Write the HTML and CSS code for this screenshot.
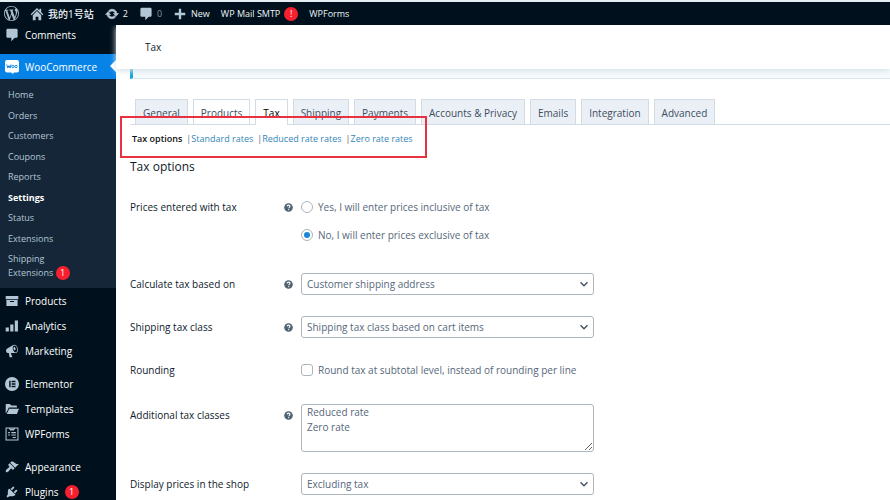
FILE: index.html
```html
<!DOCTYPE html>
<html lang="en">
<head>
    <meta charset="UTF-8">
    <meta name="viewport" content="width=device-width, initial-scale=1.0">
    <title>Tax - WooCommerce settings</title>
    <link rel="stylesheet" href="styles.css">
</head>
<body>
    <!-- Shared icons -->
    <svg class="sprite" aria-hidden="true">
        <symbol id="icon-help" viewBox="0 0 20 20">
            <circle cx="10" cy="10" r="9.5" fill="#50616f"/>
            <path d="M6.8 7.6C7 5.6 8.300 4.700 10.100 4.700c1.900 0 3.200 1 3.200 2.700 0 2.300-2.800 2.300-2.800 4.300" fill="none" stroke="#fff" stroke-width="2.400"/>
            <circle cx="10.400" cy="14.700" r="1.500" fill="#fff"/>
        </symbol>
        <symbol id="icon-chevron" viewBox="0 0 20 20">
            <path d="M3 6.500l7 7 7-7" fill="none" stroke="#47535e" stroke-width="2.800"/>
        </symbol>
        <symbol id="icon-comment" viewBox="0 0 20 20">
            <path d="M4 1h12c1.100 0 2 .900 2 2v9c0 1.100-.900 2-2 2h-2l-5 5v-5H4c-1.100 0-2-.900-2-2V3c0-1.100.900-2 2-2z"/>
        </symbol>
    </svg>

    <header class="adminbar">
        <a href="#" class="bar-item" aria-label="About WordPress">
            <svg class="wp-logo" viewBox="0 0 20 20"><path d="M20 10c0-5.510-4.490-10-10-10C4.480 0 0 4.490 0 10c0 5.520 4.480 10 10 10 5.510 0 10-4.480 10-10zM7.780 15.370L4.370 6.220c.550-.020 1.170-.080 1.170-.080.500-.060.440-1.130-.060-1.110 0 0-1.450.110-2.370.110-.180 0-.370 0-.580-.010C4.120 2.690 6.870 1.110 10 1.110c2.330 0 4.450.870 6.050 2.340-.680-.110-1.650.390-1.650 1.580 0 .740.450 1.360.900 2.100.350.610.550 1.360.550 2.460 0 1.490-1.400 5-1.400 5l-3.030-8.370c.540-.020.820-.170.820-.170.500-.050.440-1.250-.060-1.220 0 0-1.440.120-2.380.120-.870 0-2.330-.120-2.330-.120-.500-.030-.560 1.200-.060 1.220l.920.080 1.260 3.410zM17.410 10c.240-.640.740-1.870.430-4.250.700 1.290 1.050 2.710 1.050 4.250 0 3.290-1.730 6.240-4.400 7.780.970-2.590 1.940-5.200 2.920-7.780zM6.100 18.090C3.120 16.650 1.110 13.530 1.110 10c0-1.300.230-2.480.720-3.590C3.250 10.300 4.670 14.200 6.100 18.090zm4.030-6.630l2.580 6.980c-.860.290-1.760.450-2.710.450-.790 0-1.570-.110-2.290-.330.810-2.380 1.620-4.740 2.420-7.100z"/></svg>
        </a>
        <a href="#" class="bar-item bar-site">
            <svg class="icon" viewBox="0 0 20 20"><path d="M16 7.500l3 3-1.300 1.300L10 4.200l-7.700 7.600L1 10.500 10 1.500l3.500 3.500V2.500H16zM10 5.800l6 6V19h-4v-5H8v5H4v-7.200z"/></svg>
            <span>我的1号站</span>
        </a>
        <a href="#" class="bar-item">
            <svg class="icon" viewBox="0 0 20 20"><path d="M10.200 3.280c3.530 0 6.430 2.610 6.920 6h2.080l-3.500 4-3.500-4h2.320c-.450-1.970-2.210-3.450-4.320-3.450-1.450 0-2.730.710-3.540 1.780L4.950 5.660C6.230 4.200 8.110 3.280 10.200 3.280zm-.400 13.440c-3.520 0-6.430-2.610-6.920-6H.8l3.500-4c1.170 1.330 2.330 2.670 3.500 4H5.480c.450 1.970 2.210 3.450 4.320 3.450 1.450 0 2.730-.710 3.540-1.780l1.710 1.950c-1.280 1.460-3.150 2.380-5.250 2.380z" stroke="#b3c6d5"/></svg>
            <span>2</span>
        </a>
        <a href="#" class="bar-item bar-muted">
            <svg class="icon"><use href="#icon-comment"/></svg>
            <span>0</span>
        </a>
        <a href="#" class="bar-item">
            <svg class="icon" viewBox="0 0 20 20"><path d="M8.300 2.500h3.400v5.800h5.800v3.400h-5.800v5.800H8.300v-5.800H2.500V8.300h5.800z"/></svg>
            <span>New</span>
        </a>
        <a href="#" class="bar-item">WP Mail SMTP <span class="badge">!</span></a>
        <a href="#" class="bar-item">WPForms</a>
    </header>

    <div class="layout">
        <nav class="sidebar" aria-label="Main menu">
            <a href="#" class="menu-item"><svg class="icon"><use href="#icon-comment"/></svg>Comments</a>

            <a href="#" class="menu-item menu-current">
                <svg class="icon" viewBox="0 0 20 20"><path d="M3 0h14a3 3 0 0 1 3 3v12a3 3 0 0 1-3 3h-4l-2 2-2-2H3a3 3 0 0 1-3-3V3a3 3 0 0 1 3-3z" fill="#fff"/><path d="M2.500 6.500l1.500 5 1.700-3.500 1.500 3.500 1.500-5" fill="none" stroke="#0783e8" stroke-width="1.400"/><circle cx="11.300" cy="9.300" r="1.700" fill="none" stroke="#0783e8" stroke-width="1.300"/><circle cx="15.800" cy="9.300" r="1.700" fill="none" stroke="#0783e8" stroke-width="1.300"/></svg>WooCommerce
            </a>
            <ul class="submenu">
                <li><a href="#">Home</a></li>
                <li><a href="#">Orders</a></li>
                <li><a href="#">Customers</a></li>
                <li><a href="#">Coupons</a></li>
                <li><a href="#">Reports</a></li>
                <li><a href="#" class="current">Settings</a></li>
                <li><a href="#">Status</a></li>
                <li><a href="#">Extensions</a></li>
                <li><a href="#">Shipping<br>Extensions <span class="badge">1</span></a></li>
            </ul>

            <a href="#" class="menu-item"><svg class="icon" viewBox="0 0 20 20"><path d="M1 3h18v4.500H1zM2 8.500h16V17H2zM7 10v1.500h6V10z" fill-rule="evenodd"/></svg>Products</a>
            <a href="#" class="menu-item"><svg class="icon" viewBox="0 0 20 20"><path d="M1 12h4.500v6H1zM7.500 8H12v10H7.500zM14 2h4.500v16H14z"/></svg>Analytics</a>
            <a href="#" class="menu-item"><svg class="icon" viewBox="0 0 20 20"><path d="M18.150 5.940c.460 1.620.380 3.220-.020 4.480-.420 1.280-1.260 2.180-2.300 2.480-.160.060-.260.060-.400.060-.060.020-.120.020-.180.020-.060.020-.140.020-.220.020h-6.800l2.220 5.500c.020.140-.060.260-.140.340-.080.100-.240.160-.340.160H6.950c-.100 0-.260-.060-.340-.160-.080-.080-.160-.200-.140-.340l-1-5.500H4.250l-.020-.020c-.500.060-1.080-.180-1.540-.620s-.880-1.080-1.060-1.880c-.240-.800-.200-1.560-.020-2.200.180-.620.580-1.080 1.060-1.300l.020-.020 9-5.400c.100-.060.180-.100.240-.160.060-.040.140-.080.240-.120.160-.080.280-.120.500-.180 1.040-.300 2.240.100 3.220.980s1.840 2.240 2.260 3.860zm-2.580 5.980h-.020c.400-.100.740-.340 1.040-.700.580-.700.860-1.760.860-3.040 0-.640-.100-1.300-.280-1.980-.340-1.360-1.020-2.500-1.780-3.240s-1.680-1.100-2.460-.880c-.820.220-1.400.960-1.700 2-.320 1.040-.280 2.360.060 3.720.380 1.360 1 2.500 1.800 3.240.780.740 1.620 1.100 2.480.880zm-2.540-7.520c.220-.040.420-.020.620.040.380.160.760.480 1.020 1s.420 1.200.420 1.780c0 .300-.040.560-.120.800-.180.480-.440.840-.860.940-.340.100-.800-.060-1.140-.400s-.640-.860-.780-1.500c-.180-.620-.120-1.240.020-1.720s.480-.840.820-.940z"/></svg>Marketing</a>

            <a href="#" class="menu-item menu-group"><svg class="icon" viewBox="0 0 20 20"><path d="M10 0a10 10 0 1 0 0 20 10 10 0 0 0 0-20zM6 5.500h2v9H6zm3.500 0H15v2H9.500zm0 3.500H15v2H9.500zm0 3.500H15v2H9.500z" fill-rule="evenodd"/></svg>Elementor</a>
            <a href="#" class="menu-item"><svg class="icon" viewBox="0 0 20 20"><path d="M1 16V4q0-1 1-1h5l2 2h7q1 0 1 1v2H5.500L2 15zM6 9.500h14L17 17H2.500z"/></svg>Templates</a>
            <a href="#" class="menu-item"><svg class="icon" viewBox="0 0 20 20"><path d="M1.500 1.500h17v17h-17zM6 2l2.500 2.500L10 3l1.500 1.500L14 2M4.500 8h2.500m2 0h6.500M4.500 11.500h2.500m2 0h6.500M11 15h4.500" fill="none" stroke="#b3c6d5" stroke-width="1.500"/></svg>WPForms</a>

            <a href="#" class="menu-item menu-group"><svg class="icon" viewBox="0 0 20 20"><path d="M14.480 11.060L7.410 3.990l1.500-1.500c.500-.560 2.300-.470 3.510.320 1.210.800 1.430 1.280 2.910 2.100 1.180.640 2.450 1.260 4.450.850zm-.710.710L6.700 4.700 4.930 6.470c-.390.390-.390 1.020 0 1.410l1.060 1.060c.390.390.390 1.030 0 1.420-.600.600-1.430 1.110-2.210 1.690-.350.260-.700.530-1.010.840C1.430 14.230.4 16.080 1.400 17.070c.990 1 2.840-.030 4.180-1.360.310-.310.580-.660.850-1.020.570-.780 1.080-1.610 1.690-2.210.390-.390 1.020-.390 1.410 0l1.060 1.060c.390.390 1.020.390 1.410 0z"/></svg>Appearance</a>
            <a href="#" class="menu-item"><svg class="icon" viewBox="0 0 20 20"><path d="M13.110 4.360L9.870 7.600 8 5.730l3.240-3.240c.350-.340 1.050-.200 1.560.320.520.510.660 1.210.310 1.550zm-8 1.770l.910-1.120 9.010 9.010-1.190.840c-.710.710-2.630 1.160-3.820 1.160H6.140L4.900 17.260c-.590.590-1.540.590-2.120 0-.590-.580-.590-1.530 0-2.120l1.240-1.240v-3.880c0-1.130.400-3.190 1.090-3.890zm7.260 3.970l3.240-3.240c.340-.350 1.040-.210 1.550.310.520.510.660 1.210.310 1.550l-3.240 3.250z"/></svg>Plugins <span class="badge">1</span></a>
        </nav>

        <main class="content">
            <div class="page-header">Tax</div>
            <div class="notice"></div>

            <nav class="tabs" aria-label="Settings">
                <a href="#" class="tab">General</a>
                <a href="#" class="tab tab-light">Products</a>
                <a href="#" class="tab tab-active">Tax</a>
                <a href="#" class="tab">Shipping</a>
                <a href="#" class="tab">Payments</a>
                <a href="#" class="tab">Accounts &amp; Privacy</a>
                <a href="#" class="tab">Emails</a>
                <a href="#" class="tab">Integration</a>
                <a href="#" class="tab">Advanced</a>
            </nav>

            <div class="sections">
                <a href="#" class="current">Tax options</a>
                <a href="#">Standard rates</a>
                <a href="#">Reduced rate rates</a>
                <a href="#">Zero rate rates</a>
                <div class="highlight"></div>
            </div>

            <form class="settings">
                <h2>Tax options</h2>

                <div class="row row-radios" role="radiogroup" aria-labelledby="prices-label">
                    <span class="row-label" id="prices-label">Prices entered with tax</span>
                    <svg class="help"><use href="#icon-help"/></svg>
                    <div class="choices">
                        <label class="choice"><input type="radio" name="prices" value="yes">Yes, I will enter prices inclusive of tax</label>
                        <label class="choice"><input type="radio" name="prices" value="no" checked>No, I will enter prices exclusive of tax</label>
                    </div>
                </div>

                <div class="row">
                    <label class="row-label" for="based-on">Calculate tax based on</label>
                    <svg class="help"><use href="#icon-help"/></svg>
                    <div class="select">
                        <select id="based-on"><option>Customer shipping address</option></select>
                        <svg class="chevron"><use href="#icon-chevron"/></svg>
                    </div>
                </div>

                <div class="row">
                    <label class="row-label" for="shipping-class">Shipping tax class</label>
                    <svg class="help"><use href="#icon-help"/></svg>
                    <div class="select">
                        <select id="shipping-class"><option>Shipping tax class based on cart items</option></select>
                        <svg class="chevron"><use href="#icon-chevron"/></svg>
                    </div>
                </div>

                <div class="row row-checkbox">
                    <span class="row-label">Rounding</span>
                    <label class="choice choice-single"><input type="checkbox" name="rounding">Round tax at subtotal level, instead of rounding per line</label>
                </div>

                <div class="row">
                    <label class="row-label" for="classes">Additional tax classes</label>
                    <svg class="help"><use href="#icon-help"/></svg>
                    <textarea id="classes">Reduced rate
Zero rate</textarea>
                </div>

                <div class="row">
                    <label class="row-label" for="display">Display prices in the shop</label>
                    <div class="select">
                        <select id="display"><option>Excluding tax</option></select>
                        <svg class="chevron"><use href="#icon-chevron"/></svg>
                    </div>
                </div>
            </form>
        </main>
    </div>
</body>
</html>
```

FILE: styles.css
```css
* {
    box-sizing: border-box;
}

body {
    display: flex;
    flex-direction: column;
    height: 100vh;
    margin: 0;
    overflow: hidden;
    background: #fff;
    color: #0e1a2b;
    font-family: "Open Sans", "Noto Sans CJK SC", sans-serif;
    font-size: 10px;
}

a {
    color: inherit;
    text-decoration: none;
}

.sprite {
    position: absolute;
    width: 0;
    height: 0;
}

.icon {
    width: 14px;
    height: 14px;
    flex: none;
    fill: #b3c6d5;
}

.badge {
    display: inline-block;
    width: 14px;
    height: 14px;
    border-radius: 50%;
    background: #f8202f;
    color: #fff;
    font-size: 9px;
    line-height: 14px;
    text-align: center;
}

/* Admin bar */
.adminbar {
    display: flex;
    flex: none;
    align-items: center;
    gap: 11px;
    height: 25px;
    padding: 0 4px;
    border-top: 2px solid #e4eff3;
    background: #00101c;
    color: #eef4f8;
    font-size: 9px;
    font-weight: 500;
    z-index: 1;
}

.bar-item {
    display: flex;
    align-items: center;
    gap: 4px;
}

.bar-site {
    font-size: 10px;
}

.wp-logo {
    width: 15px;
    height: 15px;
    fill: #a9bccb;
}

.bar-muted {
    color: #8799a8;
}

/* Sidebar */
.layout {
    display: flex;
    flex: 1;
    min-height: 0;
}

.sidebar {
    width: 116px;
    flex: none;
    margin-top: -3px;
    background: #00101c;
    color: #fff;
}

.menu-item {
    display: flex;
    align-items: center;
    gap: 6px;
    height: 25px;
    padding-left: 5px;
}

.menu-group {
    margin-top: 8px;
}

.menu-current {
    position: relative;
    margin-top: 7px;
    background: #0783e8;
    color: #fff;
}

.menu-current::after {
    content: "";
    position: absolute;
    right: 0;
    top: 6px;
    border: 6px solid transparent;
    border-left: 0;
    border-right-color: #fff;
}

.submenu {
    margin: 0;
    padding: 6px 8px 8px;
    list-style: none;
    background: #152638;
    color: #b4c6d5;
    font-size: 9px;
    line-height: 14px;
}

.submenu li {
    height: 21px;
    padding-top: 3px;
}

.submenu li:nth-child(even) {
    height: 20px;
}

.submenu li:last-child {
    height: auto;
}

.submenu .current {
    color: #fff;
    font-weight: 700;
}

.submenu .badge {
    vertical-align: top;
}

/* Content */
.content {
    flex: 1;
    min-width: 0;
}

.page-header {
    position: relative;
    height: 44px;
    padding-left: 29px;
    background: #fff;
    box-shadow: 0 2px 6px #d5e2e9;
    line-height: 45px;
}

.notice {
    height: 10px;
    margin-left: 14px;
    border-left: 3px solid #10a5dc;
    border-bottom: 1px solid #dbe6ee;
    background: #f6fbfd;
}

.tabs {
    display: flex;
    gap: 5px;
    height: 46px;
    margin-left: 14px;
    padding: 20px 0 0 5px;
    border-bottom: 1px solid #d3dce4;
}

.tab {
    padding: 0 7px;
    border: 1px solid #d3dce4;
    border-bottom: 0;
    background: #ebf0f7;
    color: #3d4d60;
    font-weight: 500;
    line-height: 26px;
}

.tab-light {
    background: #fff;
}

.tab-active {
    height: 26px;
    background: #fff;
    color: #000;
}

.sections {
    position: relative;
    display: flex;
    padding: 6px 0 0 16px;
    color: #3387b8;
    font-size: 9px;
    line-height: 16px;
}

.sections a + a::before {
    content: "|";
    margin-left: 4px;
    color: #5a6b78;
}

.sections .current {
    color: #111;
    font-weight: 600;
}

.highlight {
    position: absolute;
    left: 4px;
    top: -9px;
    width: 307px;
    height: 42px;
    border: 2px solid #e7323f;
    pointer-events: none;
}

/* Settings form */
.settings {
    display: flex;
    flex-direction: column;
    gap: 21px;
    padding: 11px 14px 0;
}

.settings h2 {
    margin: 0;
    font-size: 12px;
    font-weight: 500;
    line-height: 17px;
}

.row {
    display: grid;
    grid-template-columns: 154px 17px minmax(0, 293px);
    align-items: start;
    line-height: 22px;
}

.row-label {
    font-weight: 500;
}

.help {
    width: 9px;
    height: 9px;
    margin-top: 7px;
}

.select,
.choice-single,
.row textarea {
    grid-column: 3;
}

.row-radios {
    padding-bottom: 6px;
}

.row-checkbox {
    padding-bottom: 2px;
}

.choices {
    display: grid;
    gap: 6px;
}

.choice {
    display: flex;
    align-items: center;
    gap: 5px;
    color: #56677a;
    white-space: nowrap;
}

.choice input {
    appearance: none;
    display: grid;
    place-items: center;
    width: 12px;
    height: 12px;
    margin: 0;
    border: 1px solid #aab5bf;
    border-radius: 50%;
    background: #fff;
}

.choice input[type="checkbox"] {
    border-radius: 3px;
}

.choice input:checked::before {
    content: "";
    width: 6px;
    height: 6px;
    border-radius: 50%;
    background: #1b87d6;
}

.select {
    position: relative;
}

.select select,
.row textarea {
    display: block;
    width: 100%;
    height: 22px;
    margin: 0;
    padding: 0 5px;
    appearance: none;
    border: 1px solid #aab5bf;
    border-radius: 3px;
    background: #fff;
    color: #56677a;
    font-family: inherit;
    font-size: 10px;
}

.row textarea {
    height: 48px;
    line-height: 15px;
    resize: vertical;
}

.chevron {
    position: absolute;
    right: 5px;
    top: 6px;
    width: 10px;
    height: 10px;
    pointer-events: none;
}
```
